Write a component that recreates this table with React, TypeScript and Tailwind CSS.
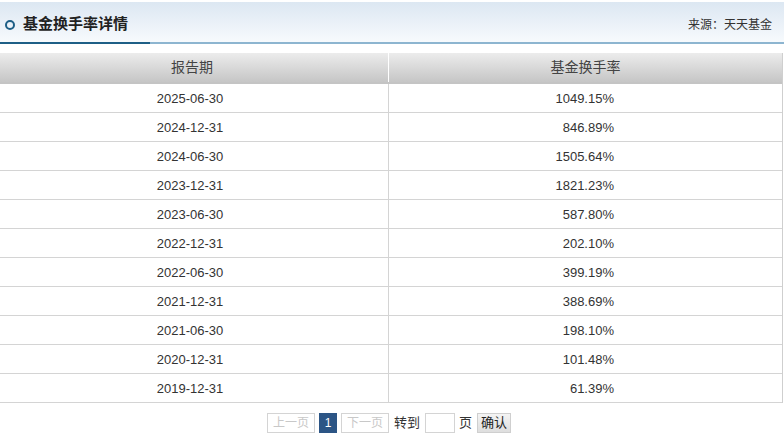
const rows = [
  ["2025-06-30", "1049.15%"],
  ["2024-12-31", "846.89%"],
  ["2024-06-30", "1505.64%"],
  ["2023-12-31", "1821.23%"],
  ["2023-06-30", "587.80%"],
  ["2022-12-31", "202.10%"],
  ["2022-06-30", "399.19%"],
  ["2021-12-31", "388.69%"],
  ["2021-06-30", "198.10%"],
  ["2020-12-31", "101.48%"],
  ["2019-12-31", "61.39%"],
];

const font = { fontFamily: '"Liberation Sans", Arial, "Noto Sans CJK SC", sans-serif' };

export default function App() {
  return (
    <div className="w-[784px] h-[447px] bg-white text-[#333] overflow-hidden" style={font}>
      {/* title bar */}
      <div className="mt-[2px] h-[40px] pt-[5px] flex items-center justify-between bg-gradient-to-b from-[#dce7f2] to-[#f7fafd]">
        <div className="flex items-center">
          <span className="ml-[5px] w-[10px] h-[10px] rounded-full border-2 border-[#1e5f86]" />
          <span className="ml-[8px] text-[15px] font-bold text-[#222]">基金换手率详情</span>
        </div>
        <span className="mr-[12px] text-[12px] text-[#333]">来源：天天基金</span>
      </div>
      <div className="flex h-[2px]">
        <div className="w-[150px] bg-[#1e5f86]" />
        <div className="flex-1 bg-[#8db5d0]" />
      </div>

      {/* table */}
      <div className="mt-[9px] w-[783px] border-r border-[#cfcfcf]">
        <div className="flex h-[31px] bg-gradient-to-b from-[#ececec] to-[#c6c6c6] border-b-2 border-[#c4c4c4] text-[14px] text-[#444]">
          <div className="w-[388px] flex items-center justify-center pr-[4px]">报告期</div>
          <div className="w-px bg-white" />
          <div className="flex-1 flex items-center justify-center">基金换手率</div>
        </div>
        {rows.map((r, i) => (
          <div key={i} className="flex h-[29px] border-b border-[#d4d4d4] text-[13px]">
            <div className="w-[388px] flex items-center justify-center pr-[8px] pt-[2px]">{r[0]}</div>
            <div className="w-px bg-[#d4d4d4]" />
            <div className="flex-1 flex items-center justify-end pr-[168px] pt-[2px]">{r[1]}</div>
          </div>
        ))}
      </div>

      {/* pager */}
      <div className="mt-[10px] flex items-center h-[20px] text-[12px]">
        <span className="ml-[267px] w-[48px] h-[20px] border border-[#d4d4d4] text-[#c8c8c8] flex items-center justify-center">上一页</span>
        <span className="ml-[4px] w-[18px] h-[20px] bg-[#2c5585] text-white flex items-center justify-center">1</span>
        <span className="ml-[4px] w-[48px] h-[20px] border border-[#d4d4d4] text-[#c8c8c8] flex items-center justify-center">下一页</span>
        <span className="ml-[5px] text-[13px] text-[#333]">转到</span>
        <span className="ml-[5px] w-[30px] h-[20px] border border-[#d4d4d4] bg-white" />
        <span className="ml-[4px] text-[13px] text-[#333]">页</span>
        <span className="ml-[5px] w-[34px] h-[20px] border border-[#cfcfcf] bg-gradient-to-b from-[#f4f4f4] to-[#dedede] text-[13px] text-[#222] flex items-center justify-center">确认</span>
      </div>
    </div>
  );
}
